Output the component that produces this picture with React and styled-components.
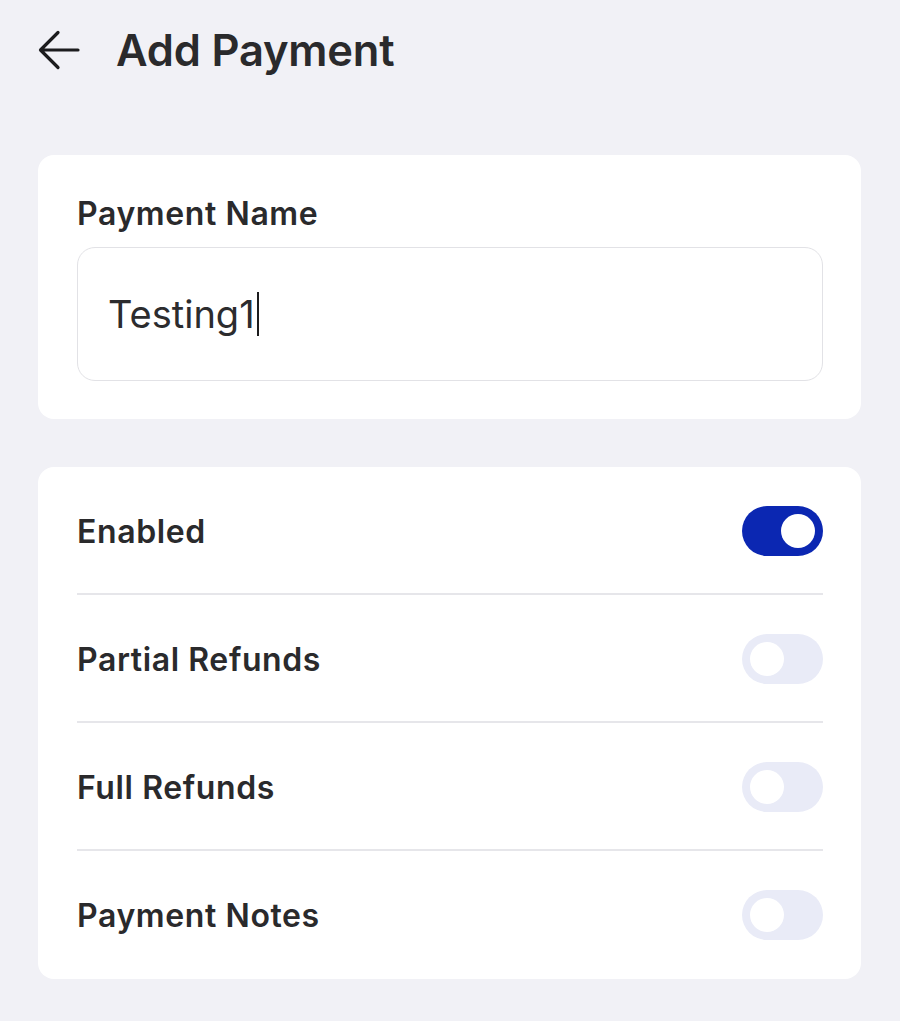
import React from "react";
import styled, { createGlobalStyle } from "styled-components";

const Global = createGlobalStyle`
  html, body { margin: 0; padding: 0; background: #f1f1f6; }
  body { font-family: Inter, "Noto Sans", sans-serif; color: #272729; }
`;

const Page = styled.div`
  width: 900px;
  min-height: 1021px;
  background: #f1f1f6;
  padding: 0 39px 0 38px;
  box-sizing: border-box;
`;

const Header = styled.header`
  display: flex;
  align-items: center;
  height: 100px;
  gap: 36px;
`;

const BackButton = styled.button`
  border: 0;
  background: none;
  padding: 0;
  display: flex;
  width: 42px;
  height: 42px;
  color: #1c1c1e;
`;

const Title = styled.h1`
  margin: 0;
  font-size: 43.5px;
  font-weight: 600;
  letter-spacing: -0.2px;
  color: #2a2a2c;
`;

const Card = styled.section`
  background: #ffffff;
  border-radius: 16px;
  margin-top: ${(p) => p.$mt}px;
  padding: ${(p) => p.$pad};
`;

const Label = styled.label`
  display: block;
  font-size: 32px;
  font-weight: 600;
  letter-spacing: 0.6px;
  color: #2a2a2c;
  line-height: 36px;
  margin-bottom: 15px;
`;

const InputBox = styled.div`
  height: 134px;
  border: 1.5px solid #e2e2e6;
  border-radius: 18px;
  box-sizing: border-box;
  display: flex;
  align-items: center;
  padding-left: 30px;
  font-size: 38px;
  color: #2c2c2e;
`;

const Caret = styled.span`
  display: inline-block;
  width: 2px;
  height: 44px;
  background: #1c1c1e;
  margin-left: 2px;
  vertical-align: middle;
`;

const Row = styled.div`
  display: flex;
  align-items: center;
  justify-content: space-between;
  height: 128px;
  box-sizing: border-box;
  padding-top: ${(p) => (p.$last ? "0" : "2px")};
  border-bottom: ${(p) => (p.$last ? "none" : "2px solid #e6e6ea")};
`;

const RowLabel = styled.span`
  font-size: 32px;
  font-weight: 600;
  letter-spacing: 0.6px;
  color: #2a2a2c;
`;

const Toggle = styled.span`
  width: 81px;
  height: 50px;
  border-radius: 25px;
  background: ${(p) => (p.$on ? "#0b27b2" : "#e9ebf7")};
  display: flex;
  align-items: center;
  justify-content: ${(p) => (p.$on ? "flex-end" : "flex-start")};
  padding: 0 8px;
  box-sizing: border-box;
`;

const Knob = styled.span`
  width: 34px;
  height: 34px;
  border-radius: 50%;
  background: #ffffff;
`;

const rows = [
  { label: "Enabled", on: true },
  { label: "Partial Refunds", on: false },
  { label: "Full Refunds", on: false },
  { label: "Payment Notes", on: false },
];

export default function App() {
  return (
    <>
      <Global />
      <Page>
        <Header>
          <BackButton aria-label="Back">
            <svg width="42" height="42" viewBox="0 0 42 42" fill="none">
              <path
                d="M40 21H3M20 3.5L2.5 21L20 38.5"
                stroke="currentColor"
                strokeWidth="3.2"
                strokeLinecap="round"
                strokeLinejoin="round"
              />
            </svg>
          </BackButton>
          <Title>Add Payment</Title>
        </Header>
        <Card $mt={55} $pad="41px 38px 38px 39px">
          <Label>Payment Name</Label>
          <InputBox>
            Testing1
            <Caret />
          </InputBox>
        </Card>
        <Card $mt={48} $pad="0 38px 0 39px">
          {rows.map((r, i) => (
            <Row key={r.label} $last={i === rows.length - 1}>
              <RowLabel>{r.label}</RowLabel>
              <Toggle $on={r.on}>
                <Knob />
              </Toggle>
            </Row>
          ))}
        </Card>
      </Page>
    </>
  );
}
